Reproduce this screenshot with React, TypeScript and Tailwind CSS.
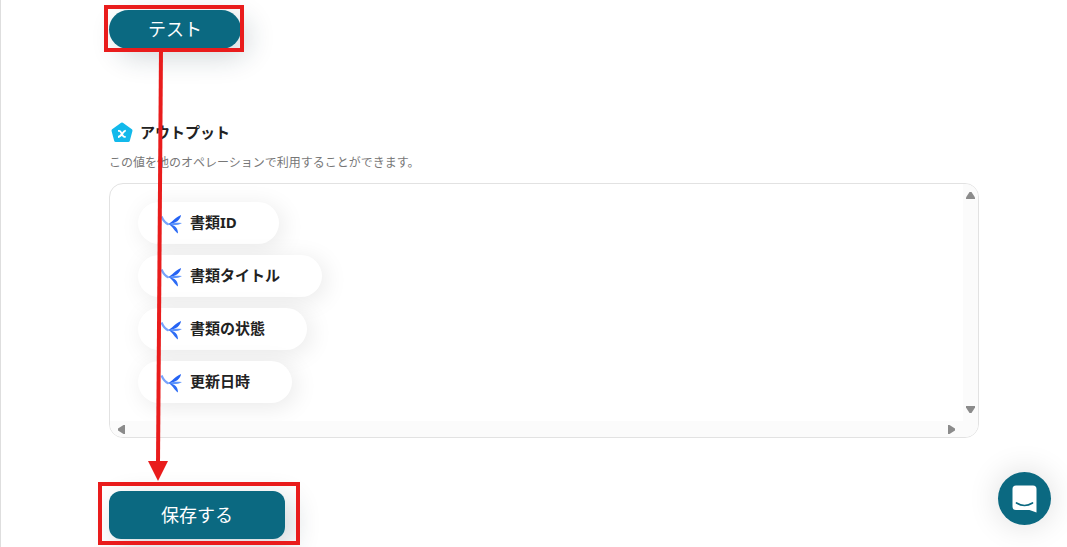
interface OutputItem {
  id: string;
  label: string;
}

const outputs: OutputItem[] = [
  { id: "document-id", label: "書類ID" },
  { id: "document-title", label: "書類タイトル" },
  { id: "document-status", label: "書類の状態" },
  { id: "updated-at", label: "更新日時" },
];

function OutputIcon() {
  return (
    <svg viewBox="0 0 24 24" className="h-6 w-6" aria-hidden="true">
      <path d="M3.500 5.500C5 9 7 12 10.500 13.500" fill="none" stroke="#78a3fb" strokeWidth="2.200" />
      <path d="M23 4C22.500 8.500 18 12.800 10 13.300C14.500 11 16 7 23 4Z" fill="#2563f4" />
      <path d="M10 13.300C14 11.500 18 11.300 24 12C20 14.500 14.500 14.800 10 13.300Z" fill="#5f95fb" />
      <path d="M10.500 13.300C17 14 20 17 20 22.500C16 20 15.500 16 10.500 13.300Z" fill="#2d6cf5" />
    </svg>
  );
}

function PentagonIcon() {
  return (
    <svg viewBox="0 0 24 24" className="h-6 w-6" aria-hidden="true">
      <path
        d="M13 4L22 10.500L19.300 20.500H6.700L4 10.500Z"
        fill="#12b9eb"
        stroke="#12b9eb"
        strokeWidth="3"
        strokeLinejoin="round"
      />
      <path
        d="M9 10.800h1.300c2.300 0 2.600 6.100 5.200 6.100h1.200M16.800 10.700c-3 0-4.200 6.300-7.800 6.300"
        fill="none"
        stroke="#fff"
        strokeWidth="1.800"
      />
    </svg>
  );
}

function ScrollArrow({ className }: { className: string }) {
  return (
    <svg viewBox="0 0 9 7" className={className} aria-hidden="true">
      <path d="M3.500 0h2L9 5.500V7H0V5.500Z" fill="#8b8b8b" />
    </svg>
  );
}

function OutputPill({ label }: { label: string }) {
  return (
    <li className="flex h-[42px] items-center gap-2 rounded-full bg-white pr-[42px] pl-5 shadow-[4px_4px_24px_rgba(0,0,0,0.09)]">
      <OutputIcon />
      <span className="pb-0.5 text-[15px] leading-5 font-bold text-[#222]">{label}</span>
    </li>
  );
}

function OutputPanel() {
  return (
    <div className="flex flex-col overflow-hidden rounded-[14px] border border-[#e2e2e2]">
      <div className="flex">
        <ul className="flex flex-1 flex-col items-start gap-[11px] px-7 py-[18px]">
          {outputs.map((item) => (
            <OutputPill key={item.id} label={item.label} />
          ))}
        </ul>
        <div className="flex w-[15px] flex-col items-center justify-between bg-[#fbfbfb] py-2">
          <ScrollArrow className="h-[7px] w-[9px]" />
          <ScrollArrow className="h-[7px] w-[9px] rotate-180" />
        </div>
      </div>
      <div className="flex h-4 items-center justify-between bg-[#fbfbfb] pr-[22px] pl-[7px]">
        <ScrollArrow className="h-[7px] w-[9px] -rotate-90" />
        <ScrollArrow className="h-[7px] w-[9px] rotate-90" />
      </div>
    </div>
  );
}

function FlowArrow() {
  return (
    <svg
      viewBox="0 0 24 432"
      className="pointer-events-none absolute top-[50px] left-36 h-[432px] w-6"
      aria-hidden="true"
    >
      <path d="M16 0L13 414" stroke="#e91c1c" strokeWidth="4" />
      <path d="M3 411h20L13 431Z" fill="#e91c1c" />
    </svg>
  );
}

export default function App() {
  return (
    <div className="relative min-h-screen border-l border-[#dedede] bg-white pt-[10px] pr-[88px] pb-2 pl-[108px] font-['Noto_Sans','Noto_Sans_CJK_JP',sans-serif]">
      <div className="relative w-fit">
        <button
          type="button"
          className="block h-[39px] w-[132px] rounded-full bg-[#0b6981] pb-0.5 text-lg text-white shadow-[8px_8px_28px_rgba(20,50,65,0.2)]"
        >
          テスト
        </button>
        <span className="pointer-events-none absolute -top-[5px] -right-[3px] -bottom-[3px] -left-[5px] border-4 border-[#e91c1c]" />
      </div>

      <section className="mt-[71px]">
        <div className="flex items-center gap-[7px]">
          <PentagonIcon />
          <h2 className="text-[15px] leading-6 font-bold text-[#222]">アウトプット</h2>
        </div>
        <p className="mt-[9px] mb-2.5 text-xs leading-5 text-[#777]">
          この値を他のオペレーションで利用することができます。
        </p>
        <OutputPanel />
      </section>

      <div className="relative mt-[53px] w-fit">
        <button
          type="button"
          className="block h-12 w-44 rounded-xl bg-[#0b6981] text-lg text-white shadow-[8px_8px_28px_rgba(20,50,65,0.2)]"
        >
          保存する
        </button>
        <span className="pointer-events-none absolute -top-[9px] -right-[15px] -bottom-[6px] -left-[11px] border-4 border-[#e91c1c]" />
      </div>

      <FlowArrow />

      <button
        type="button"
        aria-label="チャットを開く"
        className="fixed right-4 bottom-[22px] flex h-[53px] w-[53px] items-center justify-center rounded-full bg-[#0b6981] shadow-[0_0_32px_rgba(0,0,0,0.14)]"
      >
        <svg viewBox="0 0 25 28" className="h-7 w-[25px]" aria-hidden="true">
          <path
            d="M4 0.500h17q3.500 0 3.500 3.500v23.500L17.500 25H4Q0.500 25 0.500 21.500V4Q0.500 0.500 4 0.500Z"
            fill="#fff"
          />
          <path
            d="M4.500 18q8 5 16 0"
            fill="none"
            stroke="#0b6981"
            strokeWidth="1.700"
            strokeLinecap="round"
          />
        </svg>
      </button>
    </div>
  );
}
